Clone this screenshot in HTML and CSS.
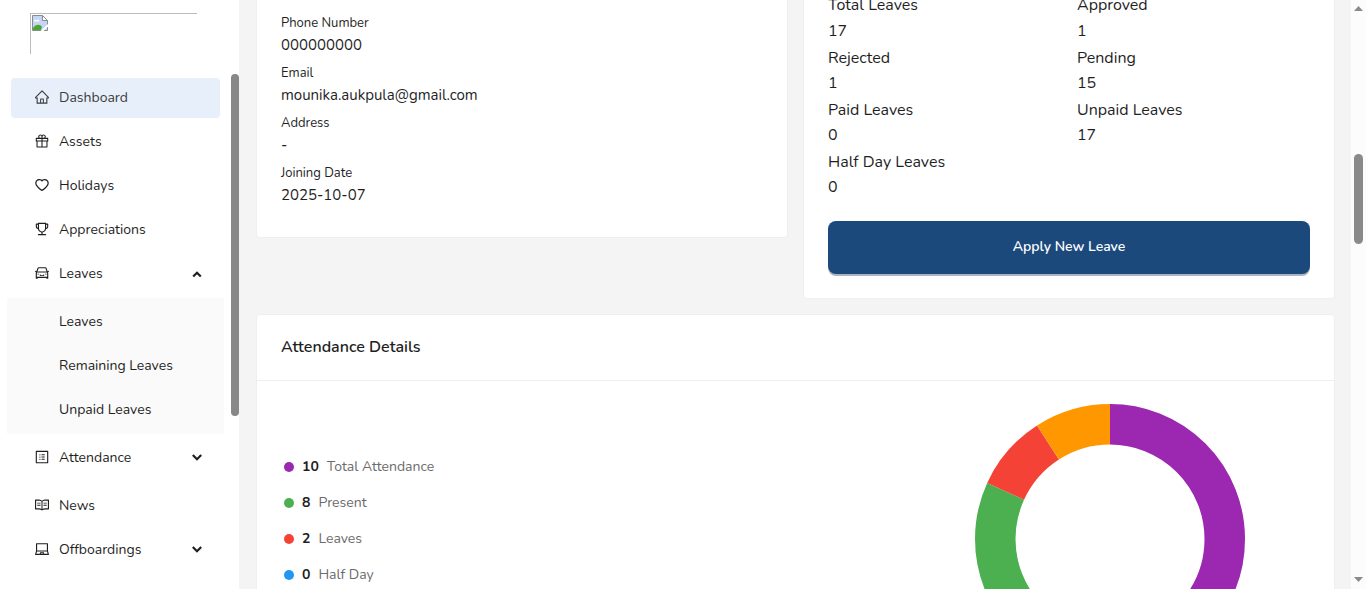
FILE: index.html
```html
<!DOCTYPE html>
<html lang="en">
<head>
<meta charset="utf-8">
<title>Dashboard</title>
<link rel="stylesheet" href="styles.css">
</head>
<body>
<div class="app">
  <aside class="sidebar">
    <div class="logo">
      <div class="logo-frame">
        <svg class="logo-icon" viewBox="0 0 16 16">
          <path d="M.5.5h10l5 5v10H.5z" fill="#c4d5f5" stroke="#8b8b8b"/>
          <path d="M2 6.500c0-2 2-2 2.500-1 1-1.500 3-1 3 1z" fill="#fff"/>
          <path d="M1 15v-2c3-4 7-4 9-1l-1 3z" fill="#4aa82e"/>
          <path d="M10.500.5v5h5z" fill="#fff" stroke="#8b8b8b"/>
          <path d="M8.500 16L16 9v2.500L11.500 16z" fill="#fff"/>
        </svg>
      </div>
    </div>
    <div class="menu-scroll">
      <nav class="menu">
        <a class="item active"><svg class="icon" viewBox="64 64 896 896"><path d="M946.5 505L560.1 118.8l-25.9-25.9a31.5 31.5 0 00-44.4 0L77.5 505a63.900 63.900 0 00-18.800 46c.4 35.200 29.700 63.300 64.900 63.300h42.500V940h691.800V614.300h43.400c17.100 0 33.200-6.700 45.300-18.800a63.600 63.600 0 0018.700-45.300c0-17-6.700-33.100-18.800-45.200zM568 868H456V664h112v204zm217.900-325.700V868H632V640c0-22.100-17.900-40-40-40H432c-22.100 0-40 17.900-40 40v228H238.100V542.300h-96l370-369.700 23.100 23.100L882 542.300h-96.100z"/></svg><span>Dashboard</span></a>
        <a class="item"><svg class="icon" viewBox="64 64 896 896"><path d="M880 310H732.400c13.600-21.400 21.600-46.800 21.600-74 0-76.100-61.900-138-138-138-41.400 0-78.700 18.400-104 47.400-25.300-29-62.600-47.400-104-47.400-76.100 0-138 61.900-138 138 0 27.200 7.900 52.600 21.600 74H144c-17.700 0-32 14.300-32 32v200c0 4.400 3.600 8 8 8h40v344c0 17.700 14.300 32 32 32h640c17.700 0 32-14.300 32-32V550h40c4.400 0 8-3.600 8-8V342c0-17.700-14.300-32-32-32zm-334-74c0-38.600 31.400-70 70-70s70 31.400 70 70-31.400 70-70 70h-70v-70zm-138-70c38.600 0 70 31.400 70 70v70h-70c-38.600 0-70-31.400-70-70s31.400-70 70-70zM180 482V378h298v104H180zm48 68h250v308H228V550zm568 308H546V550h250v308zm48-376H546V378h298v104z"/></svg><span>Assets</span></a>
        <a class="item"><svg class="icon" viewBox="64 64 896 896"><path d="M923 283.600a260.040 260.040 0 00-56.900-82.800 264.400 264.400 0 00-84-55.500A265.340 265.340 0 00679.700 125c-49.300 0-97.400 13.500-139.200 39-10 6.100-19.500 12.800-28.500 20.100-9-7.300-18.500-14-28.500-20.100-41.800-25.500-89.900-39-139.200-39-35.500 0-69.900 6.800-102.400 20.300-31.400 13-59.700 31.700-84 55.500a258.440 258.440 0 00-56.900 82.800c-13.900 32.300-21 66.600-21 101.900 0 33.300 6.800 68 20.300 103.300 11.300 29.500 27.500 60.100 48.200 91 32.800 48.900 77.900 99.900 133.900 151.600 92.800 85.700 184.700 144.900 188.600 147.300l23.700 15.200c10.500 6.700 24 6.700 34.500 0l23.700-15.200c3.900-2.500 95.700-61.600 188.600-147.300 56-51.700 101.100-102.700 133.900-151.600 20.700-30.900 37-61.500 48.200-91 13.500-35.300 20.300-70 20.300-103.300.1-35.300-7-69.600-20.900-101.900zM512 814.800S156 586.700 156 385.500C156 283.600 240.300 201 344.300 201c73.100 0 136.500 40.800 167.700 100.400C543.200 241.800 606.600 201 679.700 201c104 0 188.300 82.600 188.300 184.500 0 201.200-356 429.300-356 429.300z"/></svg><span>Holidays</span></a>
        <a class="item"><svg class="icon" viewBox="64 64 896 896"><path d="M868 160h-92v-40c0-4.400-3.600-8-8-8H256c-4.400 0-8 3.600-8 8v40h-92a44 44 0 00-44 44v148c0 81.700 60 149.600 138.200 162C265.700 630.200 359 721.700 476 734.500v105.200H280c-17.700 0-32 14.300-32 32V904c0 4.400 3.600 8 8 8h512c4.400 0 8-3.600 8-8v-32.300c0-17.700-14.300-32-32-32H548V734.500C665 721.700 758.300 630.200 773.800 514 852 501.600 912 433.700 912 352V204a44 44 0 00-44-44zM184 352V232h64v207.600a91.990 91.990 0 01-64-87.600zm520 128c0 49.100-19.100 95.400-53.900 130.100-34.800 34.800-81 53.900-130.100 53.900h-16c-49.100 0-95.400-19.100-130.100-53.900-34.800-34.800-53.900-81-53.900-130.100V184h384v296zm136-128c0 41-26.900 75.800-64 87.600V232h64v120z"/></svg><span>Appreciations</span></a>
        <a class="item"><svg class="icon" viewBox="64 64 896 896"><path d="M380 704h264c4.400 0 8-3.600 8-8v-84c0-4.400-3.600-8-8-8h-40c-4.400 0-8 3.600-8 8v36H428v-36c0-4.400-3.600-8-8-8h-40c-4.400 0-8 3.600-8 8v84c0 4.400 3.600 8 8 8zm340-123a40 40 0 1080 0 40 40 0 10-80 0zm239-167.600L935.300 372a8 8 0 00-10.900-2.900l-50.700 29.600-78.300-216.200a63.900 63.900 0 00-60.900-44.400H301.200c-34.700 0-65.500 22.400-76.200 55.500l-74.600 205.200-50.800-29.600a8 8 0 00-10.900 2.900L65 413.400c-2.200 3.800-.9 8.600 2.900 10.800l60.400 35.200-14.500 40c-1.200 3.200-1.800 6.600-1.800 10v348.200c0 15.700 11.800 28.400 26.300 28.400h67.600c12.300 0 23-9.300 25.600-22.300l7.700-37.700h545.600l7.700 37.700c2.700 13 13.300 22.300 25.600 22.300h67.600c14.500 0 26.300-12.700 26.300-28.400V509.400c0-3.400-.6-6.800-1.800-10l-14.500-40 60.300-35.200a8 8 0 003-10.800zM840 517v237H184V517l15.600-43h624.800l15.600 43zM292.700 218.100l.5-1.300.4-1.300c1.100-3.300 4.100-5.500 7.600-5.500h427.600l75.400 208H220l72.700-199.900zM224 581a40 40 0 1080 0 40 40 0 10-80 0z"/></svg><span>Leaves</span><svg class="chevron" viewBox="0 0 10 10"><path d="M1.200 8.500L5 4.700l3.800 3.800"/></svg></a>
        <div class="submenu">
          <a class="item">Leaves</a>
          <a class="item">Remaining Leaves</a>
          <a class="item">Unpaid Leaves</a>
        </div>
        <a class="item parent"><svg class="icon" viewBox="64 64 896 896"><path d="M880 112H144c-17.700 0-32 14.300-32 32v736c0 17.700 14.300 32 32 32h736c17.700 0 32-14.300 32-32V144c0-17.700-14.300-32-32-32zm-40 728H184V184h656v656zM484 336h200v64H484zM484 480h200v64H484zM484 624h200v64H484zM340 368a40 40 0 1080 0 40 40 0 10-80 0zm0 144a40 40 0 1080 0 40 40 0 10-80 0zm0 144a40 40 0 1080 0 40 40 0 10-80 0z"/></svg><span>Attendance</span><svg class="chevron" viewBox="0 0 10 10"><path d="M.8 3L5 7.200 9.200 3"/></svg></a>
        <a class="item"><svg class="icon" viewBox="64 64 896 896"><path d="M928 161H699.200c-49.100 0-97.100 14.100-138.400 40.700L512 233l-48.800-31.300A255.200 255.200 0 00324.800 161H96c-17.700 0-32 14.300-32 32v568c0 17.700 14.300 32 32 32h228.800c49.100 0 97.100 14.100 138.400 40.700l44.400 28.600c1.300.8 2.800 1.300 4.300 1.300s3-.4 4.300-1.300l44.400-28.600C602 807.100 650.100 793 699.200 793H928c17.700 0 32-14.300 32-32V193c0-17.700-14.300-32-32-32zM324.800 721H136V233h188.800c35.400 0 69.800 10.100 99.500 29.200l48.800 31.300 6.900 4.500v462c-47.600-25.600-100.800-39-155.200-39zm563.200 0H699.200c-54.400 0-107.600 13.400-155.200 39V298l6.900-4.500 48.800-31.300c29.700-19.100 64.100-29.200 99.500-29.200H888v488zM208 361h211v60H208zM208 501h211v60H208zM605 361h211v60H605zM605 501h211v60H605z"/></svg><span>News</span></a>
        <a class="item"><svg class="icon" viewBox="64 64 896 896"><path d="M956.900 845.100L896.400 632V168c0-17.700-14.300-32-32-32h-704c-17.700 0-32 14.300-32 32v464L67.900 845.100C60.400 866 75.800 888 98 888h828.800c22.200 0 37.600-22 30.100-42.900zM200.400 208h624v395h-624V208zm228.300 608l8.100-37h150.300l8.100 37H428.700zm224 0l-19.100-86.700c-.8-3.700-4.100-6.300-7.800-6.300H398.200c-3.800 0-7 2.600-7.800 6.300L371.300 816H151l42.300-149h638.200l42.300 149H652.700z"/></svg><span>Offboardings</span><svg class="chevron" viewBox="0 0 10 10"><path d="M.8 3L5 7.200 9.200 3"/></svg></a>
      </nav>
      <div class="side-thumb"></div>
    </div>
  </aside>

  <main class="content">
    <div class="row">
      <section class="card profile">
        <dl class="facts">
          <dt>Phone Number</dt><dd>000000000</dd>
          <dt>Email</dt><dd>mounika.aukpula@gmail.com</dd>
          <dt>Address</dt><dd>-</dd>
          <dt>Joining Date</dt><dd>2025-10-07</dd>
        </dl>
      </section>
      <section class="card leaves">
        <div class="stats">
          <div class="stat"><span>Total Leaves</span><b>17</b></div>
          <div class="stat"><span>Approved</span><b>1</b></div>
          <div class="stat"><span>Rejected</span><b>1</b></div>
          <div class="stat"><span>Pending</span><b>15</b></div>
          <div class="stat"><span>Paid Leaves</span><b>0</b></div>
          <div class="stat"><span>Unpaid Leaves</span><b>17</b></div>
          <div class="stat"><span>Half Day Leaves</span><b>0</b></div>
        </div>
        <button class="apply">Apply New Leave</button>
      </section>
    </div>
    <section class="card attendance">
      <h2>Attendance Details</h2>
      <div class="attendance-body">
        <ul class="legend">
          <li><i class="dot purple"></i><b>10</b><span>Total Attendance</span></li>
          <li><i class="dot green"></i><b>8</b><span>Present</span></li>
          <li><i class="dot red"></i><b>2</b><span>Leaves</span></li>
          <li><i class="dot blue"></i><b>0</b><span>Half Day</span></li>
        </ul>
        <svg class="donut" viewBox="-135 -135 270 270">
          <g transform="rotate(-90)">
            <circle class="arc s-purple" r="114.750" pathLength="22" stroke-dasharray="10 12"/>
            <circle class="arc s-green" r="114.750" pathLength="22" stroke-dasharray="8 14" stroke-dashoffset="-10"/>
            <circle class="arc s-red" r="114.750" pathLength="22" stroke-dasharray="2 20" stroke-dashoffset="-18"/>
            <circle class="arc s-orange" r="114.750" pathLength="22" stroke-dasharray="2 20" stroke-dashoffset="-20"/>
          </g>
        </svg>
      </div>
    </section>
  </main>

  <div class="page-scroll">
    <svg class="arrow" viewBox="0 0 9 5"><path d="M0 5L4.500 0 9 5z"/></svg>
    <div class="page-thumb"></div>
    <svg class="arrow down" viewBox="0 0 9 5"><path d="M0 0h9L4.500 5z"/></svg>
  </div>
</div>
</body>
</html>
```
FILE: styles.css
```css
* { box-sizing: border-box; }
html, body { margin: 0; height: 100%; overflow: hidden; }
body {
  font-family: Nunito, Lato, "Noto Sans", sans-serif;
  font-size: 14px;
  color: #1f1f1f;
  background: #f4f4f4;
}
.app { display: flex; height: 589px; overflow: hidden; }

/* Sidebar */
.sidebar { width: 239px; flex: none; background: #fff; display: flex; flex-direction: column; }
.logo { height: 74px; padding: 13px 0 0 30px; flex: none; }
.logo-frame { width: 167px; height: 41px; border: solid #bcbcbc; border-width: 1px 0 0 1px; padding: 1px; }
.logo-icon { display: block; width: 16px; height: 16px; }
.menu-scroll { flex: 1; min-height: 0; display: flex; justify-content: space-between; }
.menu { width: 224px; padding: 4px 0 0 7px; }
.item {
  display: flex;
  align-items: center;
  height: 40px;
  margin: 0 4px 4px;
  padding: 0 18px 2px 24px;
  border-radius: 4px;
}
.item.active { background: #e7f0fa; color: #3c3c3c; }
.icon { width: 14px; height: 14px; margin-right: 10px; fill: currentColor; flex: none; }
.chevron { width: 10px; height: 10px; margin-left: auto; fill: none; stroke: currentColor; stroke-width: 2.2; }
.submenu { background: #fafafa; padding: 4px 0; height: 136px; }
.submenu .item { padding-left: 48px; }
.parent { margin-bottom: 8px; margin-top: 4px; }
.side-thumb { width: 8px; height: 342px; border-radius: 4px; background: #888; }

/* Content */
.content { width: 1112px; flex: none; padding: 0 16px 0 17px; }
.row { display: flex; gap: 15px; align-items: flex-start; height: 314px; }
.card { background: #fff; border: 1px solid #efefef; border-radius: 4px; }
.row .card { flex: 1; border-top: 0; border-radius: 0 0 4px 4px; padding: 0 24px; }
.profile { height: 238px; }
.facts { margin: 13px 0 0; }
.facts dt { font-size: 13px; line-height: 20px; height: 20px; }
.facts dd { margin: 0 0 5px; font-size: 15px; line-height: 25px; height: 25px; }
.leaves { height: 299px; }
.stats { display: grid; grid-template-columns: 249px 1fr; grid-auto-rows: 52.14px; margin-top: -6.57px; height: 227.57px; }
.stat { font-size: 16px; }
.stat span, .stat b { display: block; line-height: 25.14px; font-weight: 400; }
.apply {
  display: block;
  width: 100%;
  height: 53px;
  padding: 0 0 2px;
  border: 0;
  border-radius: 8px;
  background: #1b497c;
  box-shadow: 0 2px 0 #adb4bd;
  color: #fff;
  font: 600 14px Nunito, Lato, "Noto Sans", sans-serif;
}
.attendance { height: 420px; }
.attendance h2 {
  margin: 0;
  height: 66px;
  line-height: 64px;
  padding: 0 24px;
  border-bottom: 1px solid #efefef;
  font-size: 16px;
  font-weight: 600;
}
.attendance-body { display: flex; justify-content: space-between; padding: 23px 89px 0 27px; }
.legend { list-style: none; margin: 0; padding: 45px 0 0; }
.legend li { display: flex; align-items: center; height: 36px; }
.legend b, .legend span { padding-bottom: 2px; }
.legend b { margin-right: 8px; font-weight: 700; }
.legend span { color: #6b6b6b; }
.dot { width: 10px; height: 10px; margin-right: 8px; border-radius: 50%; }
.purple { background: #9c27b0; }
.green { background: #4caf50; }
.red { background: #f44336; }
.blue { background: #2196f3; }
.donut { width: 270px; height: 270px; flex: none; }
.arc { fill: none; stroke-width: 40.5; }
.s-purple { stroke: #9c27b0; }
.s-green { stroke: #4caf50; }
.s-red { stroke: #f44336; }
.s-orange { stroke: #ff9800; }

/* Page scroll track */
.page-scroll { width: 15px; background: #fcfcfc; padding: 6px 3px 7px; display: flex; flex-direction: column; }
.arrow { width: 9px; height: 5px; fill: #8a8a8a; flex: none; }
.page-thumb { width: 9px; height: 90px; margin-top: 143px; border-radius: 5px; background: #8a8a8a; }
.arrow.down { margin-top: auto; }
```
